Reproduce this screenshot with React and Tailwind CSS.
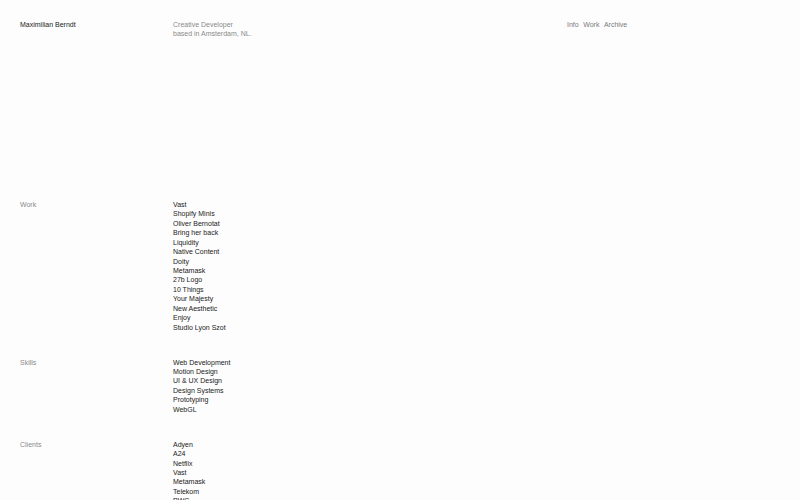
import React from "react";

const sections = [
  {
    label: "Work",
    items: [
      "Vast",
      "Shopify Minis",
      "Oliver Bernotat",
      "Bring her back",
      "Liquidity",
      "Native Content",
      "Doity",
      "Metamask",
      "27b Logo",
      "10 Things",
      "Your Majesty",
      "New Aesthetic",
      "Enjoy",
      "Studio Lyon Szot",
    ],
  },
  {
    label: "Skills",
    items: ["Web Development", "Motion Design", "UI & UX Design", "Design Systems", "Prototyping", "WebGL"],
  },
  {
    label: "Clients",
    items: ["Adyen", "A24", "Netflix", "Vast", "Metamask", "Telekom", "PWC"],
  },
];

export default function App() {
  return (
    <div className="min-h-[500px] bg-[#fdfdfd] px-[20px] pt-[20px] pb-10 font-['Liberation_Sans',Arial,sans-serif] text-[7px] leading-[1.35] text-[#222]">
      <header className="grid grid-cols-[153px_394px_auto]">
        <div>Maximilian Berndt</div>
        <div className="text-[#8a8a8a]">
          <p>Creative Developer</p>
          <p>based in Amsterdam, NL.</p>
        </div>
        <nav className="flex gap-[4.5px] text-[#7a7a7a]">
          <a href="#">Info</a>
          <a href="#">Work</a>
          <a href="#">Archive</a>
        </nav>
      </header>

      <main className="mt-[161px] flex flex-col gap-[25.5px]">
        {sections.map((section) => (
          <section key={section.label} className="grid grid-cols-[153px_1fr]">
            <h2 className="text-[#8a8a8a]">{section.label}</h2>
            <ul>
              {section.items.map((item, i) => (
                <li key={i}>{item}</li>
              ))}
            </ul>
          </section>
        ))}
      </main>
    </div>
  );
}
